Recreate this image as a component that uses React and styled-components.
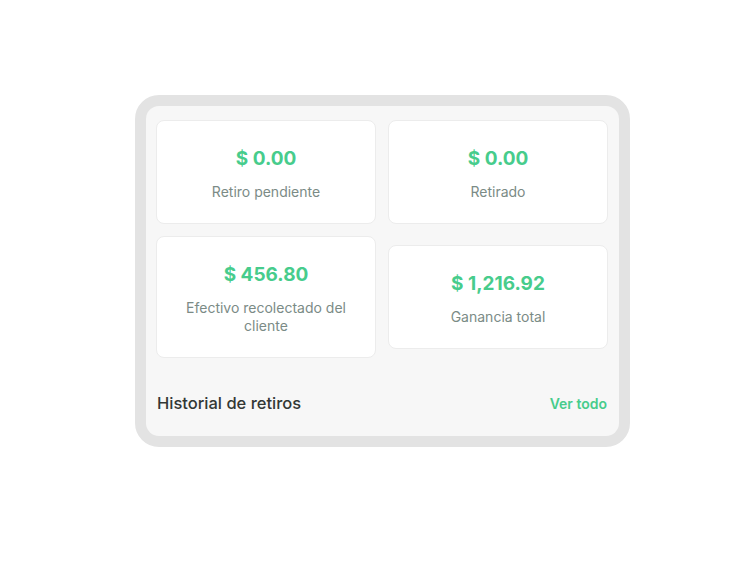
import styled, { createGlobalStyle } from "styled-components";

const GlobalStyle = createGlobalStyle`
    * {
        box-sizing: border-box;
    }

    body {
        margin: 0;
        background: #ffffff;
        font-family: "Inter", "Noto Sans", sans-serif;
    }
`

const stats = [
    { amount: "$ 0.00", label: "Retiro pendiente" },
    { amount: "$ 0.00", label: "Retirado" },
    { amount: "$ 456.80", label: "Efectivo recolectado del cliente" },
    { amount: "$ 1,216.92", label: "Ganancia total" },
];

function App() {
    return (
        <Page>
            <GlobalStyle />
            <Frame>
                <Screen>
                    <Grid>
                        {stats.map((s, i) => (
                            <Card key={i}>
                                <Amount>{s.amount}</Amount>
                                <Label>{s.label}</Label>
                            </Card>
                        ))}
                    </Grid>
                    <Footer>
                        <Title>Historial de retiros</Title>
                        <SeeAll>Ver todo</SeeAll>
                    </Footer>
                </Screen>
            </Frame>
        </Page>
    )
}

export default App;

const Page = styled.div`
    width: 750px;
    height: 563px;
    padding: 95px 0 0 135px;
`

const Frame = styled.div`
    width: 495px;
    height: 352px;
    border: 11px solid #e3e3e3;
    border-radius: 24px;
    background: #e3e3e3;
`

const Screen = styled.div`
    height: 100%;
    background: #f7f7f7;
    border-radius: 13px;
    padding: 14px 11px 0 10px;
`

const Grid = styled.div`
    display: grid;
    grid-template-columns: 220px 220px;
    column-gap: 12px;
    row-gap: 12px;
    align-items: center;
`

const Card = styled.div`
    background: #ffffff;
    border: 1px solid #ececec;
    border-radius: 8px;
    padding: 26px 20px 22px;
    display: flex;
    flex-direction: column;
    align-items: center;
    text-align: center;
    gap: 12px;
`

const Amount = styled.p`
    margin: 0;
    font-size: 19px;
    line-height: 24px;
    font-weight: 700;
    color: #47cc8c;
`

const Label = styled.p`
    margin: 0;
    font-size: 14px;
    line-height: 18px;
    color: #7b8b86;
`

const Footer = styled.div`
    display: flex;
    justify-content: space-between;
    align-items: center;
    margin-top: 33px;
    padding: 0 1px;
    height: 24px;
`

const Title = styled.p`
    margin: 0;
    font-size: 16.5px;
    font-weight: 500;
    color: #333835;
`

const SeeAll = styled.p`
    margin: 0;
    font-size: 14px;
    font-weight: 600;
    color: #47cc8c;
`
